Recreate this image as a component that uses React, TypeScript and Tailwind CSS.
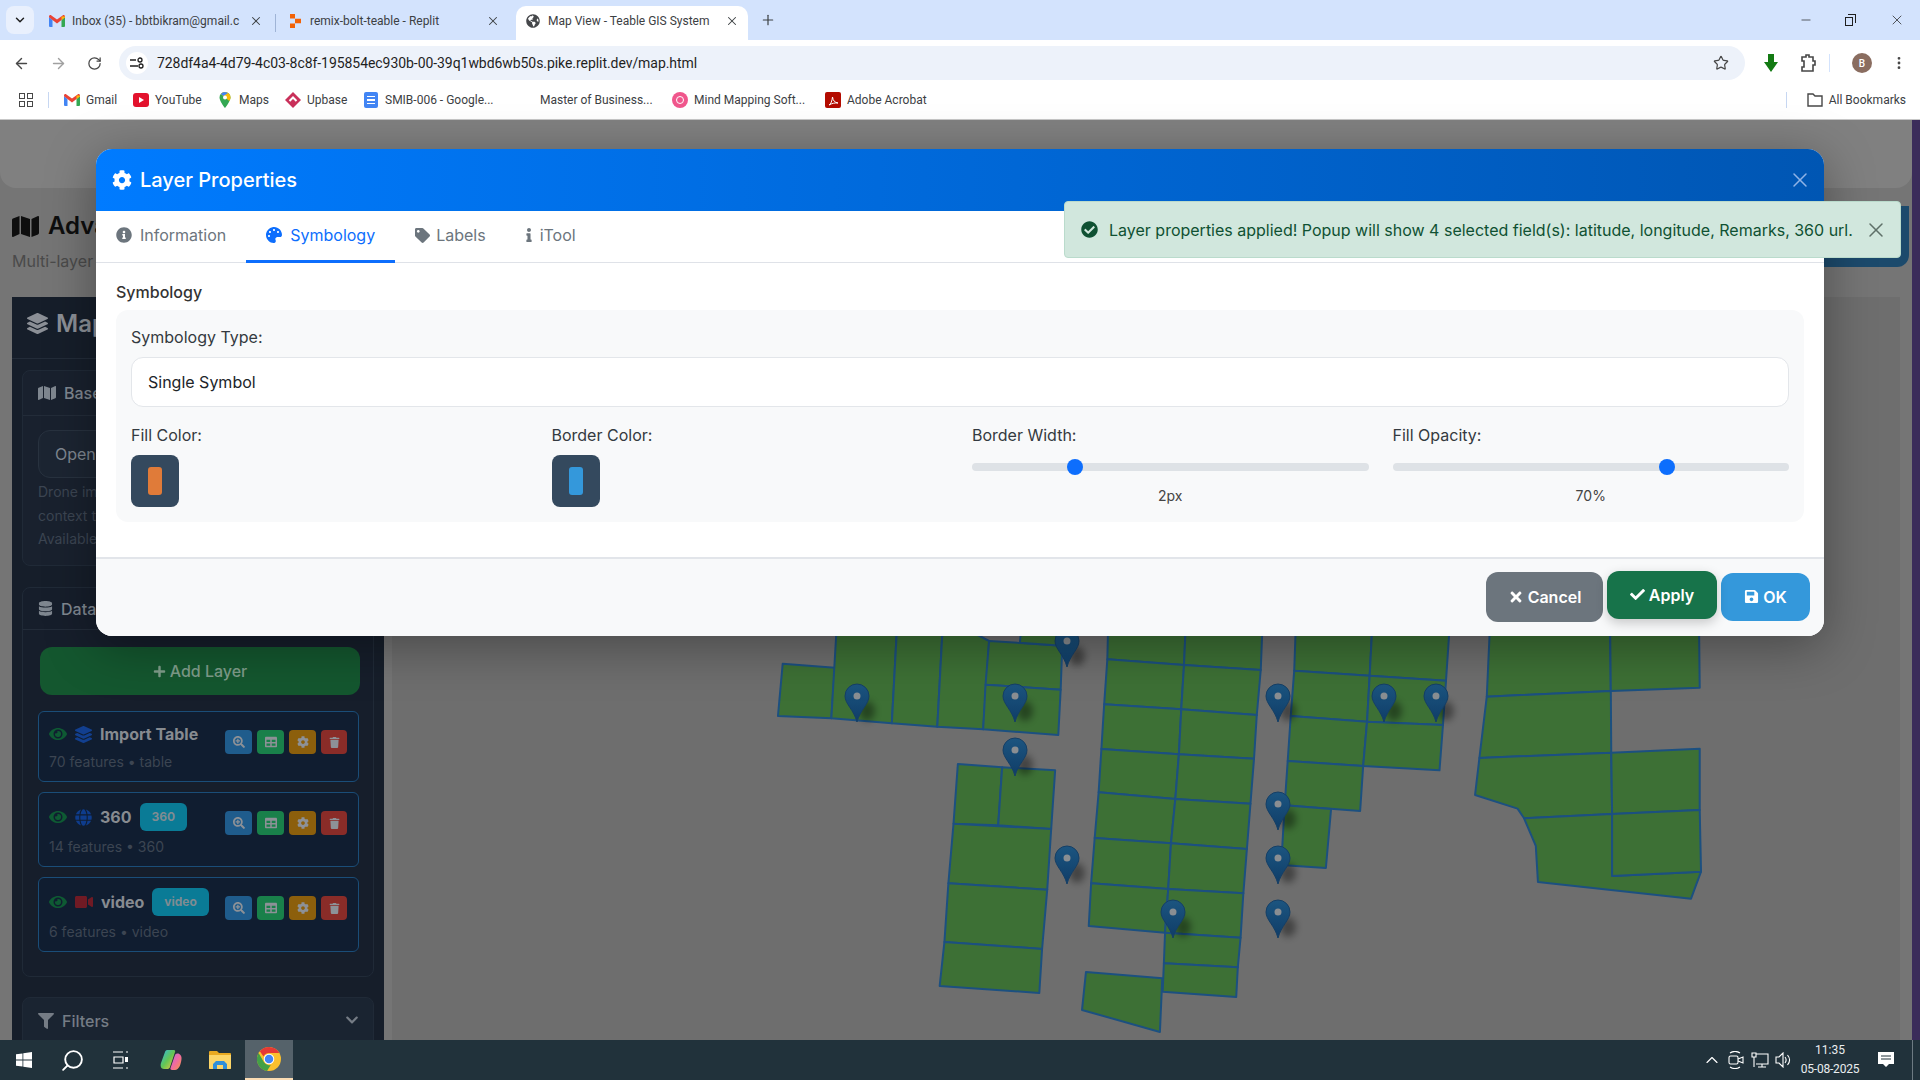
import { ArrowLeft, ArrowRight, ChevronDown, ChevronUp, Minus, MoreVertical, Plus, RotateCw, Search, Star, X } from "lucide-react";
import {
  FaCheck,
  FaCheckCircle,
  FaChevronDown,
  FaCog,
  FaDatabase,
  FaEye,
  FaFilter,
  FaGlobe,
  FaGlobeAmericas,
  FaInfo,
  FaInfoCircle,
  FaLayerGroup,
  FaMap,
  FaPalette,
  FaPlus,
  FaSave,
  FaSearchPlus,
  FaTable,
  FaTag,
  FaTimes,
  FaTrash,
  FaVideo,
} from "react-icons/fa";

function GmailIcon() {
  return (
    <svg width="16" height="12" viewBox="0 0 16 12" className="shrink-0">
      <path d="M0 2v9a1 1 0 0 0 1 1h2.500V5z" fill="#4285f4" />
      <path d="M16 2v9a1 1 0 0 1-1 1h-2.500V5z" fill="#34a853" />
      <path d="M3.500 5 0 2.200V1.500C0 .3 1.400-.4 2.400.4L8 4.600l5.600-4.200c1-.8 2.400-.1 2.400 1.100v.7L12.500 5 8 8.400z" fill="#ea4335" />
      <path d="M12.500 1.500 16 1.500v.7L12.500 5z" fill="#fbbc04" />
    </svg>
  );
}

function ChromeIcon({ size }: { size: number }) {
  return (
    <svg width={size} height={size} viewBox="0 0 48 48" className="shrink-0">
      <circle cx="24" cy="24" r="24" fill="#fbc02d" />
      <path d="M24 0a24 24 0 0 1 20.800 12H24a12 12 0 0 0-11 7.200L5.600 8.600A24 24 0 0 1 24 0z" fill="#e53935" />
      <path d="M3.200 12 14 30.500a12 12 0 0 0 13.500 5.300L20 48A24 24 0 0 1 3.200 12z" fill="#43a047" />
      <circle cx="24" cy="24" r="10.500" fill="#fff" />
      <circle cx="24" cy="24" r="8.500" fill="#4285f4" />
    </svg>
  );
}

function Tab({ icon, title, box }: { icon: React.ReactNode; title: string; box: string }) {
  return (
    <div className={`flex h-[34px] items-center pb-[4px] ${box}`}>
      <span className="flex w-[16px] shrink-0 items-center justify-center">{icon}</span>
      <span className="ml-[7px] flex-1 overflow-hidden whitespace-nowrap text-[12px] text-[#3c4043]">{title}</span>
      <X size={14} strokeWidth={1.8} className="shrink-0 text-[#3c4043]" />
    </div>
  );
}

function BrowserChrome() {
  const bookmarks = [
    { label: "Gmail", width: "w-[69px]", icon: <GmailIcon /> },
    { label: "YouTube", width: "w-[84px]", icon: <span className="flex h-[14px] w-[16px] items-center justify-center rounded-[3px] bg-[#e3122d]"><span className="h-0 w-0 border-y-[3px] border-l-[5px] border-y-transparent border-l-white" /></span> },
    {
      label: "Maps",
      width: "w-[68px]",
      icon: (
        <svg width="16" height="16" viewBox="0 0 16 16">
          <path d="M8 0a5.500 5.500 0 0 0-5.500 5.500C2.500 9.500 8 16 8 16s5.500-6.500 5.500-10.500A5.500 5.500 0 0 0 8 0z" fill="#34a853" />
          <path d="M8 0a5.500 5.500 0 0 0-4.200 2l8.500 7c.7-1.300 1.200-2.500 1.200-3.500A5.500 5.500 0 0 0 8 0z" fill="#fbbc04" />
          <path d="M8 0a5.500 5.500 0 0 0-4.200 2L6.500 4 11 1z" fill="#4285f4" />
          <circle cx="8" cy="5.500" r="2" fill="#fff" />
        </svg>
      ),
    },
    {
      label: "Upbase",
      width: "w-[78px]",
      icon: (
        <svg width="16" height="16" viewBox="0 0 16 16">
          <path d="M8 0 16 8l-8 8-8-8z" fill="#c9305a" />
          <path d="M4.500 9 8 5.500 11.500 9" fill="none" stroke="#fff" strokeWidth="2" />
        </svg>
      ),
    },
    {
      label: "SMIB-006 - Google...",
      width: "w-[155px]",
      icon: (
        <span className="flex h-[16px] w-[14px] flex-col justify-center gap-[2px] rounded-[2px] bg-[#4285f4] px-[3px]">
          <span className="h-[1.5px] bg-white" />
          <span className="h-[1.5px] bg-white" />
          <span className="h-[1.5px] bg-white" />
        </span>
      ),
    },
    { label: "Master of Business...", width: "w-[154px]", icon: <span className="w-[16px]" /> },
    {
      label: "Mind Mapping Soft...",
      width: "w-[153px]",
      icon: (
        <span className="flex h-[16px] w-[16px] items-center justify-center rounded-full bg-[#f0568c]">
          <span className="h-[8px] w-[8px] rounded-full border-[1.5px] border-white" />
        </span>
      ),
    },
    {
      label: "Adobe Acrobat",
      width: "w-[100px]",
      icon: (
        <span className="flex h-[16px] w-[16px] items-center justify-center rounded-[2px] bg-[#b30b00]">
          <svg width="11" height="11" viewBox="0 0 11 11" fill="none" stroke="#fff" strokeWidth="1">
            <path d="M1 10c2-1 3-4 3.500-8 .5 4 2.500 5.500 5.500 6-3-.3-6 .3-9 2z" />
          </svg>
        </span>
      ),
    },
  ];

  return (
    <div className="h-[120px] shrink-0 border-b border-[#c7c7c7] bg-white font-['Roboto',sans-serif]">
      {/* tab strip */}
      <div className="flex h-[40px] items-end bg-[#d3e3fd] pl-[6px]">
        <div className="mb-[6px] flex h-[28px] w-[28px] items-center justify-center rounded-lg bg-[#e9f0fd]">
          <ChevronDown size={14} strokeWidth={2.5} className="text-[#1f1f1f]" />
        </div>
        <Tab box="w-[241px] pl-[15px] pr-[12px]" title="Inbox (35) - bbtbikram@gmail.c" icon={<GmailIcon />} />
        <div className="mb-[8px] h-[18px] w-px bg-[#9fb4d6]" />
        <Tab
          box="w-[240px] pl-[11px] pr-[16px]"
          title="remix-bolt-teable - Replit"
          icon={
            <svg width="11" height="14" viewBox="0 0 11 14" fill="#f26207">
              <path d="M0 0h5v4.500H0zM5 4.700h6v4.600H5zM0 9.500h5V14H0z" />
            </svg>
          }
        />
        <Tab box="w-[232px] rounded-t-[10px] bg-white pl-[9px] pr-[9px]" title="Map View - Teable GIS System" icon={<FaGlobeAmericas size={14} className="text-[#45474a]" />} />
        <Plus size={16} strokeWidth={1.8} className="mb-[12px] ml-[12px] text-[#3c4043]" />
        <div className="mb-[12px] ml-auto flex items-center gap-[32px] pr-[15px] text-[#1f1f1f]">
          <Minus size={14} strokeWidth={1.2} />
          <span className="relative block h-[12px] w-[12px]">
            <span className="absolute bottom-0 left-0 h-[9px] w-[8px] border border-[#1f1f1f] bg-[#d3e3fd]" />
            <span className="absolute right-[1px] top-0 h-[9px] w-[8px] border-r border-t border-[#1f1f1f]" />
          </span>
          <X size={16} strokeWidth={1.1} />
        </div>
      </div>

      {/* address bar */}
      <div className="flex h-[46px] items-center pl-[13px]">
        <ArrowLeft size={17} strokeWidth={2} className="text-[#474747]" />
        <ArrowRight size={17} strokeWidth={2} className="ml-[20px] text-[#a0a0a0]" />
        <RotateCw size={15} strokeWidth={2} className="ml-[20px] text-[#474747]" />
        <div className="ml-[17px] flex h-[34px] w-[1626px] items-center rounded-full bg-[#edf2fa] pl-[7px] pr-[16px]">
          <span className="flex h-[22px] w-[22px] items-center justify-center rounded-full bg-white">
            <svg width="14" height="12" viewBox="0 0 14 12" fill="none" stroke="#1f1f1f" strokeWidth="1.300">
              <path d="M0 3h6M0 9h8" />
              <circle cx="10" cy="3" r="2" />
              <circle cx="11" cy="9" r="2" />
            </svg>
          </span>
          <span className="ml-[9px] whitespace-nowrap text-[14px] tracking-[-0.06px] text-[#1f1f1f]">728df4a4-4d79-4c03-8c8f-195854ec930b-00-39q1wbd6wb50s.pike.replit.dev/map.html</span>
          <Star size={16} strokeWidth={1.8} className="ml-auto text-[#474747]" />
        </div>
        <svg width="14" height="18" viewBox="0 0 14 18" fill="#137a13" className="ml-[19px]">
          <path d="M4 0h6v8h4l-7 10L0 8h4z" />
        </svg>
        <svg width="16" height="18" viewBox="0 0 16 18" fill="none" stroke="#474747" strokeWidth="1.600" className="ml-[22px]">
          <path d="M2 3h4V1h3v2h4v4h2v4h-2v6H2v-4h2V7H2z" />
        </svg>
        <div className="ml-[13px] h-[18px] w-px bg-[#d3e3fd]" />
        <span className="ml-[22px] flex h-[20px] w-[20px] items-center justify-center rounded-full bg-[#8a6d60] text-[10px] font-medium text-white">B</span>
        <MoreVertical size={16} strokeWidth={2.2} className="ml-[19px] text-[#474747]" />
      </div>

      {/* bookmarks */}
      <div className="flex h-[28px] items-center pl-[19px] pr-[14px]">
        <div className="grid h-[14px] w-[14px] grid-cols-2 gap-[2px]">
          <span className="border-[1.5px] border-[#474747]" />
          <span className="border-[1.5px] border-[#474747]" />
          <span className="border-[1.5px] border-[#474747]" />
          <span className="border-[1.5px] border-[#474747]" />
        </div>
        <div className="ml-[15px] mr-[15px] h-[16px] w-px bg-[#c7d7f2]" />
        {bookmarks.map((b) => (
          <div key={b.label} className={`flex items-center gap-[6px] whitespace-nowrap text-[12px] text-[#3c4043] ${b.width}`}>
            <span className="flex w-[16px] shrink-0 justify-center">{b.icon}</span>
            {b.label}
          </div>
        ))}
        <div className="ml-auto flex items-center text-[12px] text-[#3c4043]">
          <div className="mr-[20px] h-[16px] w-px bg-[#c7d7f2]" />
          <svg width="16" height="14" viewBox="0 0 16 14" fill="none" stroke="#474747" strokeWidth="1.400" className="mr-[6px]">
            <path d="M1 1h5l2 2h7v10H1z" />
          </svg>
          All Bookmarks
        </div>
      </div>
    </div>
  );
}

function LayerCard({ icon, name, badge, meta }: { icon: React.ReactNode; name: string; badge?: string; meta: string }) {
  return (
    <div className="flex justify-between rounded-md border border-[#1a4d78] bg-[#101d30] pb-[9px] pl-[10px] pr-[11px] pt-[10px]">
      <div>
        <div className="flex min-h-[24px] items-center">
          <FaEye size={18} className="shrink-0 text-[#0e5a33]" />
          <span className="ml-[8px] flex shrink-0 justify-center">{icon}</span>
          <span className="ml-[8px] text-[16px] font-bold text-[#878b90]">{name}</span>
          {badge && <span className="ml-[8px] flex h-[28px] items-center rounded-md bg-[#0a7b96] px-[12px] text-[12px] font-bold text-[#7f8c92]">{badge}</span>}
        </div>
        <div className="mt-[5px] text-[14px] leading-[21px] text-[#3c4552]">{meta}</div>
      </div>
      <div className="mt-[8px] flex gap-[5px] text-[#8d9197]">
        <span className="flex h-[24px] w-[27px] items-center justify-center rounded-[4px] bg-[#1f5c8c]"><FaSearchPlus size={12} /></span>
        <span className="flex h-[24px] w-[27px] items-center justify-center rounded-[4px] bg-[#19804a]"><FaTable size={12} /></span>
        <span className="flex h-[24px] w-[27px] items-center justify-center rounded-[4px] bg-[#8c5f0c]"><FaCog size={12} /></span>
        <span className="flex h-[24px] w-[26px] items-center justify-center rounded-[4px] bg-[#8a2c28]"><FaTrash size={11} /></span>
      </div>
    </div>
  );
}

function Sidebar() {
  return (
    <aside className="ml-[12px] h-[743px] w-[372px] shrink-0 overflow-hidden bg-[#161e2a]">
      <div className="flex h-[62px] items-center border-b border-[#232c39] pb-[8px] pl-[15px] text-[24px] font-semibold text-[#8b8f96]">
        <FaLayerGroup size={21} />
        <span className="ml-[8px]">Map Layers</span>
      </div>
      <div className="px-[10px] pt-[11px]">
        <div className="h-[196px] rounded-lg border border-[#202a37] bg-[#19212e]">
          <div className="flex h-[45px] items-center border-b border-[#232c39] pl-[15px] text-[16px] font-medium text-[#7f8790]">
            <FaMap size={18} />
            <span className="ml-[8px]">Base Map</span>
          </div>
          <div className="px-[15px] pt-[14px]">
            <div className="flex h-[48px] items-center rounded-xl border border-[#28323f] bg-[#1c2532] pl-[16px] text-[16px] text-[#7f8790]">OpenStreetMap</div>
            <p className="mt-[2px] text-[14px] leading-[23.500px] text-[#3c4552]">
              Drone imagery adds
              <br />
              context to the map
              <br />
              Available layers
            </p>
          </div>
        </div>

        <div className="mt-[21px] h-[390px] rounded-lg border border-[#202a37] bg-[#161e2b]">
          <div className="flex h-[42px] items-center border-b border-[#232c39] pl-[15px] text-[16px] font-medium text-[#7f8790]">
            <FaDatabase size={15} />
            <span className="ml-[8px]">Data Layers</span>
          </div>
          <div className="pl-[15px] pr-[14px] pt-[17px]">
            <div className="ml-[2px] flex h-[48px] w-[320px] items-center justify-center rounded-xl bg-[#14572f] text-[16px] font-medium text-[#7f9c8a]">
              <FaPlus size={13} />
              <span className="ml-[4px]">Add Layer</span>
            </div>
            <div className="mt-[16px] flex flex-col gap-[10px]">
              <LayerCard name="Import Table" meta="70 features • table" icon={<FaLayerGroup size={17} className="text-[#123f8f]" />} />
              <LayerCard name="360" badge="360" meta="14 features • 360" icon={<FaGlobe size={17} className="text-[#0e3c8c]" />} />
              <LayerCard name="video" badge="video" meta="6 features • video" icon={<FaVideo size={18} className="text-[#701a24]" />} />
            </div>
          </div>
        </div>

        <div className="mt-[20px] flex h-[60px] items-start justify-between rounded-t-lg border border-[#202a37] bg-[#1a2431] pl-[15px] pr-[14px] pt-[11px] text-[16px] font-medium text-[#757c85]">
          <span className="flex items-center">
            <FaFilter size={16} />
            <span className="ml-[8px]">Filters</span>
          </span>
          <FaChevronDown size={14} className="mt-[4px]" />
        </div>
      </div>
    </aside>
  );
}

function Pin({ x, y }: { x: number; y: number }) {
  return (
    <g transform={`translate(${x} ${y})`}>
      <ellipse cx="10" cy="-11" rx="8" ry="10" fill="#000" opacity="0.38" filter="url(#pinBlur)" />
      <path d="M0 0C-3-12-12-18-12-26A12 12 0 1 1 12-26C12-18 3-12 0 0Z" fill="url(#pinFill)" stroke="#153f66" strokeWidth="1" />
      <circle cx="0" cy="-26" r="3.500" fill="#8a8e92" />
    </g>
  );
}

function MapView() {
  const cells7 = [
    "108,101 240,113 231,265 96,258",
    "247,-60 399,-50 384,280 231,265",
    "399,-50 514,-40 499,290 384,280",
    "514,-40 630,33 615,298 499,290",
    "630,33 815,47 811,179 621,164",
    "621,164 811,179 805,315 615,298",
    "715,-60 860,-60 815,47 708,38",
    "551,402 663,412 653,586 540,581",
    "663,412 797,421 787,597 653,586",
    "540,581 787,597 777,779 527,760",
    "527,760 777,779 764,957 517,936",
    "517,936 764,957 757,1089 505,1068",
    "932,-60 1129,-60 1123,105 929,88",
    "1129,-60 1323,-60 1317,120 1123,105",
    "929,88 1123,105 1116,238 921,223",
    "1123,105 1317,120 1307,255 1116,238",
    "921,223 1116,238 1110,373 914,357",
    "1116,238 1307,255 1300,386 1110,373",
    "914,357 1110,373 1101,507 907,487",
    "1110,373 1300,386 1291,521 1101,507",
    "907,487 1101,507 1090,640 897,624",
    "1101,507 1291,521 1282,657 1090,640",
    "897,624 1090,640 1083,777 888,760",
    "1090,640 1282,657 1273,790 1083,777",
    "888,760 1083,777 1075,908 882,888",
    "1083,777 1273,790 1266,923 1075,908",
    "1075,908 1266,923 1259,1012 1072,1000",
    "1072,1000 1259,1012 1255,1101 1069,1085",
    "875,1026 1068,1045 1062,1206 865,1140",
  ];
  const cells8 = [
    "130,-60 307,-60 299,137 125,122",
    "307,-60 486,-60 475,152 299,137",
    "125,122 299,137 293,275 117,258",
    "299,137 475,152 468,285 293,275",
    "117,258 293,275 284,408 110,393",
    "293,275 468,285 460,421 284,408",
    "110,393 284,408 277,543 103,526",
    "103,526 210,537 198,714 95,705",
    "578,-60 853,-60 855,183 569,200",
    "853,-60 1058,-60 1060,173 855,183",
    "569,200 855,183 856,368 552,384",
    "552,384 856,368 858,552 655,565 640,536 542,495",
    "856,368 1060,356 1060,540 858,552",
    "655,565 858,552 858,738 1063,725 1040,806 687,756 682,648",
    "858,552 1060,540 1063,725 858,738",
  ];
  const pins = [
    [857, 722],
    [1015, 722],
    [1015, 776],
    [1067, 667],
    [1067, 884],
    [1173, 938],
    [1278, 722],
    [1278, 830],
    [1278, 884],
    [1278, 938],
    [1384, 722],
    [1436, 722],
  ];

  return (
    <div className="ml-[8px] mr-[12px] h-[743px] flex-1 overflow-hidden bg-[#6e6e6e]">
      <svg width="1500" height="743" viewBox="392 297 1500 743" className="block">
        <defs>
          <linearGradient id="pinFill" x1="0" y1="0" x2="0" y2="1">
            <stop offset="0" stopColor="#1c5580" />
            <stop offset="1" stopColor="#0f3d68" />
          </linearGradient>
          <filter id="pinBlur" x="-80%" y="-80%" width="260%" height="260%">
            <feGaussianBlur stdDeviation="3.500" />
          </filter>
        </defs>
        <g transform="translate(740 630) scale(0.3954 0.3333)" fill="#3d7035" stroke="#1c5080" strokeLinejoin="round">
          {cells7.map((p) => (
            <polygon key={p} points={p} strokeWidth="2" vectorEffect="non-scaling-stroke" />
          ))}
        </g>
        <g transform="translate(1240 630) scale(0.4337 0.3333)" fill="#3d7035" stroke="#1c5080" strokeLinejoin="round">
          {cells8.map((p) => (
            <polygon key={p} points={p} strokeWidth="2" vectorEffect="non-scaling-stroke" />
          ))}
        </g>
        {pins.map(([x, y]) => (
          <Pin key={`${x}-${y}`} x={x} y={y} />
        ))}
      </svg>
    </div>
  );
}

function Page() {
  return (
    <div className="relative h-[920px] shrink-0 overflow-hidden bg-[#3b2c5a]">
      <div className="mr-[8px] h-[920px] bg-[#757575]">
        <div className="h-[68px] rounded-b-2xl bg-[#808080]" />
        <div className="flex h-[109px] justify-between pl-[12px] pr-[3px]">
          <div className="pt-[21px]">
            <h1 className="flex items-center text-[24px] font-semibold leading-[34px] text-[#0e0e0e]">
              <FaMap size={27} />
              <span className="ml-[9px]">Advanced Map View</span>
            </h1>
            <p className="mt-[6px] text-[16px] text-[#4a4a4a]">Multi-layer GIS visualization</p>
          </div>
          <div className="mt-[18px] h-[61px] w-[200px] rounded-b-xl bg-[#1c4a6c]" />
        </div>
        <div className="flex">
          <Sidebar />
          <MapView />
        </div>
      </div>
    </div>
  );
}

function Slider({ label, value, percent }: { label: string; value: string; percent: number }) {
  return (
    <div>
      <div className="text-[16px] leading-[24px] text-[#343a40]">{label}</div>
      <div className="relative mt-[16px] h-[8px] rounded-full bg-[#dee2e6]">
        <span className="absolute top-[-4px] h-[16px] w-[16px] -translate-x-1/2 rounded-full bg-[#0d6efd]" style={{ left: `${percent}%` }} />
      </div>
      <div className="mt-[14px] text-center text-[14px] leading-[21px] text-[#444]">{value}</div>
    </div>
  );
}

function Swatch({ label, color }: { label: string; color: string }) {
  return (
    <div>
      <div className="text-[16px] leading-[24px] text-[#343a40]">{label}</div>
      <div className="mt-[8px] flex h-[52px] w-[48px] items-center justify-center rounded-lg bg-[#34495e]">
        <span className={`h-[28px] w-[14px] rounded-[3px] ${color}`} />
      </div>
    </div>
  );
}

function LayerModal() {
  const tabClass = "flex h-[48px] items-center gap-[8px] px-[20px] text-[16px] text-[#6c757d]";
  return (
    <div className="absolute left-[96px] top-[149px] h-[487px] w-[1728px] overflow-hidden rounded-2xl bg-white font-['Inter',sans-serif] shadow-[0_10px_50px_rgba(0,0,0,0.35)]">
      <div className="flex h-[62px] items-center justify-between bg-gradient-to-r from-[#007bff] to-[#0056b3] pl-[16px] pr-[12px] text-white">
        <div className="flex items-center gap-[8px] text-[20px] font-medium">
          <FaCog size={20} />
          Layer Properties
        </div>
        <X size={24} strokeWidth={1.5} className="text-[#8fb3e6]" />
      </div>

      <div className="flex h-[52px] border-b border-[#dfe2e8]">
        <div className={tabClass}>
          <FaInfoCircle size={16} />
          Information
        </div>
        <div className="flex h-[52px] items-center gap-[8px] border-b-[3px] border-[#0d6efd] px-[20px] pb-[1px] text-[16px] text-[#0d6efd]">
          <FaPalette size={16} />
          Symbology
        </div>
        <div className="flex h-[48px] items-center gap-[6px] px-[20px] text-[16px] text-[#6c757d]">
          <FaTag size={15} />
          Labels
        </div>
        <div className={tabClass}>
          <FaInfo size={14} className="w-[6px]" />
          iTool
        </div>
      </div>

      <div className="h-[294px] px-[20px] pt-[17px]">
        <div className="text-[16px] font-medium leading-[24px] text-[#333]">Symbology</div>
        <div className="mt-[6px] rounded-xl bg-[#f8f9fa] px-[15px] pb-[15px] pt-[15px]">
          <div className="text-[16px] leading-[24px] text-[#343a40]">Symbology Type:</div>
          <div className="mt-[8px] flex h-[50px] items-center rounded-xl border border-[#e3e6ea] bg-white pl-[16px] text-[16px] text-[#212529]">Single Symbol</div>
          <div className="mt-[16px] grid grid-cols-4 gap-[24px]">
            <Swatch label="Fill Color:" color="bg-[#e07b39]" />
            <Swatch label="Border Color:" color="bg-[#3498db]" />
            <Slider label="Border Width:" value="2px" percent={26} />
            <Slider label="Fill Opacity:" value="70%" percent={69.2} />
          </div>
        </div>
      </div>

      <div className="flex h-[79px] items-center justify-end gap-[4px] border-t-2 border-[#e2e5ea] bg-[#f8f9fa] pb-[2px] pr-[14px] text-[16px] font-semibold text-white">
        <div className="flex h-[50px] w-[117px] items-center justify-center gap-[4px] rounded-xl bg-[#6c757d]">
          <FaTimes size={16} />
          Cancel
        </div>
        <div className="flex h-[48px] w-[110px] -translate-y-[2px] items-center justify-center gap-[4px] rounded-xl bg-[#17734a] shadow-[0_4px_12px_rgba(0,0,0,0.2)]">
          <FaCheck size={15} />
          Apply
        </div>
        <div className="flex h-[48px] w-[89px] items-center justify-center gap-[4px] rounded-xl bg-[#3498db]">
          <FaSave size={15} />
          OK
        </div>
      </div>
    </div>
  );
}

function Toast() {
  return (
    <div className="absolute left-[1064px] top-[201px] flex h-[57px] w-[837px] items-center rounded-[4px] border border-[#badbcc] bg-[#d1e7dd] pl-[16px] font-['Inter',sans-serif] text-[16px] text-[#0f5132]">
      <FaCheckCircle size={17} />
      <span className="ml-[11px] whitespace-nowrap">Layer properties applied! Popup will show 4 selected field(s): latitude, longitude, Remarks, 360 url.</span>
      <X size={24} strokeWidth={1.5} className="absolute right-[12px] top-[16px] text-[#5f7068]" />
    </div>
  );
}

function Taskbar() {
  return (
    <div className="relative flex h-[40px] shrink-0 items-center bg-[#21323b] font-['Roboto',sans-serif] text-white">
      <svg width="16" height="16" viewBox="0 0 16 16" fill="#fff" className="ml-[16px]">
        <path d="M0 2.300 6.500 1.400v6.200H0zM7.300 1.300 16 0v7.600H7.300zM0 8.400h6.500v6.200L0 13.700zM7.300 8.400H16V16l-8.700-1.300z" />
      </svg>
      <Search size={25} strokeWidth={1.8} className="ml-[28px] -scale-x-100" />
      <svg width="16" height="18" viewBox="0 0 16 18" fill="none" stroke="#fff" strokeWidth="1.200" className="ml-[28px]">
        <path d="M0 1h10M0 17h10M1 6h9v6H1zM13 1h2M13 17h2" />
        <rect x="12" y="6" width="3" height="5" fill="#fff" stroke="none" />
      </svg>
      <svg width="22" height="22" viewBox="0 0 22 22" className="ml-[31px]">
        <defs>
          <linearGradient id="copA" x1="0" y1="0" x2="1" y2="1">
            <stop offset="0" stopColor="#2fb7e8" />
            <stop offset="0.5" stopColor="#62c554" />
            <stop offset="1" stopColor="#f5c542" />
          </linearGradient>
          <linearGradient id="copB" x1="0" y1="0" x2="1" y2="1">
            <stop offset="0" stopColor="#b56be0" />
            <stop offset="0.5" stopColor="#f06aa0" />
            <stop offset="1" stopColor="#f59a42" />
          </linearGradient>
        </defs>
        <path d="M7 1h7c1 0 1.500 1 1 2L10 18c-.5 1.500-1.500 2-3 2H4C1 20 0 17 1 14L5 3c.3-1 1-2 2-2z" fill="url(#copA)" />
        <path d="M12 21c-1 0-2-1-1.500-2L15 6c.5-1 1.500-1.500 2.500-1.500C20 4.500 22 7 21.500 10c-.5 5-2.500 11-6.500 11z" fill="url(#copB)" />
      </svg>
      <svg width="22" height="18" viewBox="0 0 22 18" className="ml-[27px]">
        <path d="M0 1a1 1 0 0 1 1-1h7l2 2h11a1 1 0 0 1 1 1v14a1 1 0 0 1-1 1H1a1 1 0 0 1-1-1z" fill="#e8a921" />
        <path d="M0 4h22v13a1 1 0 0 1-1 1H1a1 1 0 0 1-1-1z" fill="#fbd568" />
        <path d="M4 18v-5l3-3h8l3 3v5h-4v-4H8v4z" fill="#2f8fd8" />
      </svg>
      <div className="ml-[14px] flex h-[40px] w-[48px] items-center justify-center border-b-2 border-[#fbdcb3] bg-[#55626a]">
        <ChromeIcon size={24} />
      </div>
      <div className="ml-auto flex items-center pr-[4px]">
        <ChevronUp size={20} strokeWidth={1.4} />
        <svg width="16" height="18" viewBox="0 0 16 18" fill="none" stroke="#fff" strokeWidth="1.100" className="ml-[6px]">
          <path d="M2 2c3-2 7-2 10 0M2 16c3 2 7 2 10 0" />
          <rect x="1" y="5" width="9" height="8" rx="1.500" />
          <path d="M10 8l5-2v6l-5-2" />
        </svg>
        <svg width="18" height="16" viewBox="0 0 18 16" fill="none" stroke="#fff" strokeWidth="1.100" className="ml-[7px]">
          <path d="M5 2h12v10H5M11 12v3M7 15h8M1 1h4v4H1zM3 5v10" />
        </svg>
        <svg width="16" height="16" viewBox="0 0 16 16" fill="none" stroke="#fff" strokeWidth="1.100" className="ml-[6px]">
          <path d="M1 5h3l4-4v14l-4-4H1zM10 5c1.500 2 1.500 4 0 6M12.500 3c2.500 3 2.500 7 0 10" />
        </svg>
        <div className="ml-[1px] w-[76px] text-center text-[12px] leading-[19px] text-[#e9edef]">
          <div>11:35</div>
          <div className="tracking-[-0.2px]">05-08-2025</div>
        </div>
        <svg width="16" height="16" viewBox="0 0 16 16" className="ml-[10px]">
          <path d="M0 0h16v12h-5l-3 3-3-3H0z" fill="#fff" />
          <path d="M3 4h10M3 7h10" stroke="#21323b" strokeWidth="1" />
        </svg>
        <div className="ml-[18px] h-[40px] w-px bg-[#6d7a82]" />
        <div className="w-[3px]" />
      </div>
    </div>
  );
}

export default function App() {
  return (
    <div className="relative flex h-[1080px] w-[1920px] flex-col overflow-hidden font-['Inter',sans-serif]">
      <BrowserChrome />
      <Page />
      <Taskbar />
      <LayerModal />
      <Toast />
    </div>
  );
}
